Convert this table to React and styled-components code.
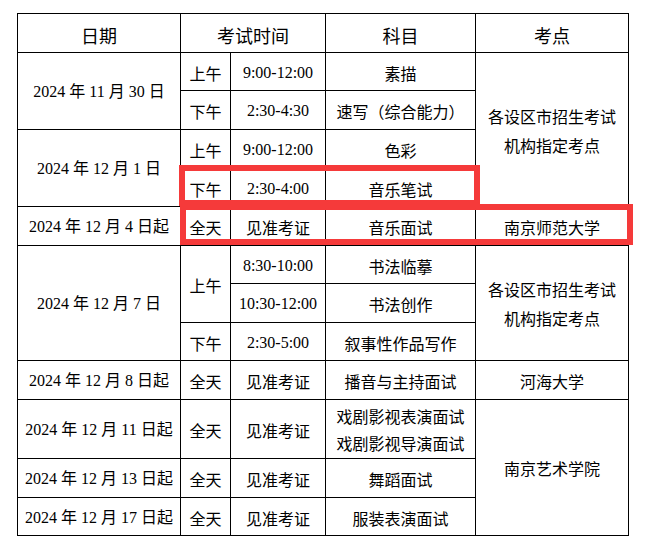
import React from "react";
import styled, { createGlobalStyle } from "styled-components";

const GlobalStyle = createGlobalStyle`
  html, body {
    margin: 0;
    padding: 0;
    background: #fff;
  }
`;

const Page = styled.div`
  padding: 13px 0 0 17px;
`;

// wrapper so the red highlight frames can sit over the table
const Frame = styled.div`
  position: relative;
  width: 611px;
`;

const Table = styled.table`
  border-collapse: collapse;
  table-layout: fixed;
  width: 611px;
  color: #000;
  font-family: "Liberation Serif", "Noto Sans CJK SC", serif;
  font-size: 16px;
`;

const Row = styled.tr`
  height: ${(p) => p.$h}px;
`;

const Head = styled.th`
  border: 1px solid #000;
  font-family: "Noto Sans CJK SC", sans-serif;
  font-weight: 400;
  font-size: 18px;
  padding: 3px 0 0;
  line-height: 1;
`;

const Cell = styled.td`
  border: 1px solid #000;
  text-align: center;
  vertical-align: middle;
  padding: 2px 0 0;
  line-height: ${(p) => (p.$lh ? p.$lh : 1)};
  font-family: ${(p) =>
    p.$sans
      ? `"Noto Sans CJK SC", sans-serif`
      : `"Liberation Serif", "Noto Sans CJK SC", serif`};
  white-space: nowrap;
`;

const Highlight = styled.div`
  position: absolute;
  box-sizing: border-box;
  border: 6.5px solid #f53a3a;
  pointer-events: none;
`;

const Date = ({ children, ...rest }) => <Cell {...rest}>{children}</Cell>;

const Place = ({ lines, lh = 1.8, ...rest }) => (
  <Cell $sans $lh={lh} {...rest}>
    {lines.map((l, i) => (
      <div key={i}>{l}</div>
    ))}
  </Cell>
);

const App = () => (
  <>
    <GlobalStyle />
    <Page>
      <Frame>
        <Table>
          <colgroup>
            <col style={{ width: 163 }} />
            <col style={{ width: 50 }} />
            <col style={{ width: 95 }} />
            <col style={{ width: 150 }} />
            <col style={{ width: 153 }} />
          </colgroup>
          <thead>
            <Row $h={39}>
              <Head>日期</Head>
              <Head colSpan={2}>考试时间</Head>
              <Head>科目</Head>
              <Head>考点</Head>
            </Row>
          </thead>
          <tbody>
            <Row $h={38}>
              <Date rowSpan={2}>2024 年 11 月 30 日</Date>
              <Cell $sans>上午</Cell>
              <Cell>9:00-12:00</Cell>
              <Cell $sans>素描</Cell>
              <Place rowSpan={4} lines={["各设区市招生考试", "机构指定考点"]} />
            </Row>
            <Row $h={39}>
              <Cell $sans>下午</Cell>
              <Cell>2:30-4:30</Cell>
              <Cell $sans>速写（综合能力）</Cell>
            </Row>
            <Row $h={39}>
              <Date rowSpan={2}>2024 年 12 月 1 日</Date>
              <Cell $sans>上午</Cell>
              <Cell>9:00-12:00</Cell>
              <Cell $sans>色彩</Cell>
            </Row>
            <Row $h={38}>
              <Cell $sans>下午</Cell>
              <Cell>2:30-4:00</Cell>
              <Cell $sans>音乐笔试</Cell>
            </Row>
            <Row $h={39}>
              <Date>2024 年 12 月 4 日起</Date>
              <Cell $sans>全天</Cell>
              <Cell $sans>见准考证</Cell>
              <Cell $sans>音乐面试</Cell>
              <Cell $sans>南京师范大学</Cell>
            </Row>
            <Row $h={38}>
              <Date rowSpan={3}>2024 年 12 月 7 日</Date>
              <Cell $sans rowSpan={2}>上午</Cell>
              <Cell>8:30-10:00</Cell>
              <Cell $sans>书法临摹</Cell>
              <Place rowSpan={3} lines={["各设区市招生考试", "机构指定考点"]} />
            </Row>
            <Row $h={39}>
              <Cell>10:30-12:00</Cell>
              <Cell $sans>书法创作</Cell>
            </Row>
            <Row $h={38}>
              <Cell $sans>下午</Cell>
              <Cell>2:30-5:00</Cell>
              <Cell $sans>叙事性作品写作</Cell>
            </Row>
            <Row $h={39}>
              <Date>2024 年 12 月 8 日起</Date>
              <Cell $sans>全天</Cell>
              <Cell $sans>见准考证</Cell>
              <Cell $sans>播音与主持面试</Cell>
              <Cell $sans>河海大学</Cell>
            </Row>
            <Row $h={59}>
              <Date>2024 年 12 月 11 日起</Date>
              <Cell $sans>全天</Cell>
              <Cell $sans>见准考证</Cell>
              <Place lh={1.7} lines={["戏剧影视表演面试", "戏剧影视导演面试"]} />
              <Place rowSpan={3} lines={["南京艺术学院"]} />
            </Row>
            <Row $h={39}>
              <Date>2024 年 12 月 13 日起</Date>
              <Cell $sans>全天</Cell>
              <Cell $sans>见准考证</Cell>
              <Cell $sans>舞蹈面试</Cell>
            </Row>
            <Row $h={38}>
              <Date>2024 年 12 月 17 日起</Date>
              <Cell $sans>全天</Cell>
              <Cell $sans>见准考证</Cell>
              <Cell $sans>服装表演面试</Cell>
            </Row>
          </tbody>
        </Table>
        <Highlight style={{ left: 162, top: 152, width: 301, height: 41 }} />
        <Highlight style={{ left: 163, top: 191, width: 453, height: 41 }} />
      </Frame>
    </Page>
  </>
);

export default App;
